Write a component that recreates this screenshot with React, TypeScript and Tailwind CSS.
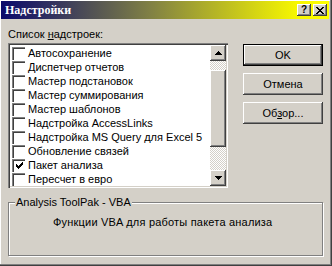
import React from 'react'

const addins = [
  { name: 'Автосохранение', on: false },
  { name: 'Диспетчер отчетов', on: false },
  { name: 'Мастер подстановок', on: false },
  { name: 'Мастер суммирования', on: false },
  { name: 'Мастер шаблонов', on: false },
  { name: 'Надстройка AccessLinks', on: false },
  { name: 'Надстройка MS Query для Excel 5', on: false },
  { name: 'Обновление связей', on: false },
  { name: 'Пакет анализа', on: true },
  { name: 'Пересчет в евро', on: false },
]

const raised =
  'shadow-[inset_-1px_-1px_#404040,inset_1px_1px_#ffffff,inset_-2px_-2px_#808080,inset_2px_2px_#d4d0c8]'

function CheckMark() {
  // classic 7x7 bitmap tick
  const px = [
    [6, 0], [5, 1], [6, 1], [0, 2], [4, 2], [5, 2], [6, 2],
    [0, 3], [1, 3], [3, 3], [4, 3], [5, 3],
    [0, 4], [1, 4], [2, 4], [3, 4], [4, 4],
    [1, 5], [2, 5], [3, 5], [2, 6],
  ]
  return (
    <svg width="7" height="7" viewBox="0 0 7 7" shapeRendering="crispEdges">
      {px.map(([x, y]) => (
        <rect key={`${x}-${y}`} x={x} y={y} width="1" height="1" fill="#000" />
      ))}
    </svg>
  )
}

function Arrow({ down }: { down?: boolean }) {
  return (
    <svg width="7" height="4" viewBox="0 0 7 4" shapeRendering="crispEdges">
      {down ? (
        <path d="M0 0h7v1H0zM1 1h5v1H1zM2 2h3v1H2zM3 3h1v1H3z" fill="#000" />
      ) : (
        <path d="M3 0h1v1H3zM2 1h3v1H2zM1 2h5v1H1zM0 3h7v1H0z" fill="#000" />
      )}
    </svg>
  )
}

function WinButton({ children, isDefault }: any) {
  return (
    <div
      className={`w-[80px] h-[22px] ${isDefault ? 'border border-black' : ''} bg-[#d4d0c8]`}
    >
      <div
        className={`w-full h-full flex items-center justify-center text-black ${raised}`}
      >
        {children}
      </div>
    </div>
  )
}

export default function App() {
  return (
    <div className="w-[332px] h-[266px] bg-[#d4d0c8] font-['Liberation_Sans',sans-serif] text-[11px] leading-[13px] text-black shadow-[inset_-1px_-1px_#404040,inset_-2px_-2px_#808080,inset_1px_1px_#ffffff] overflow-hidden">
      <div className="ml-[1px] pt-[1px] w-[328px]">
        <div className="h-[18px] flex items-center justify-between pl-[4px] pr-[2px] bg-[linear-gradient(to_right,#0a0a6c,#7f7f45_45%,#f6f600_90%,#ffff00)]">
          <span className="text-white font-bold font-['Liberation_Serif',serif] text-[12px]">Надстройки</span>
          <div className="flex gap-[2px]">
            <div className={`w-[14px] h-[12px] bg-[#d4d0c8] flex items-center justify-center ${raised}`}>
              <span className="font-bold text-[10px] leading-[10px] -mt-[1px]">?</span>
            </div>
            <div className={`w-[14px] h-[12px] bg-[#d4d0c8] flex items-center justify-center ${raised}`}>
              <svg width="8" height="7" viewBox="0 0 8 7" shapeRendering="crispEdges">
                <path d="M0 0h2v1H0zM6 0h2v1H6zM1 1h2v1H1zM5 1h2v1H5zM2 2h4v1H2zM3 3h2v1H3zM2 4h4v1H2zM1 5h2v1H1zM5 5h2v1H5zM0 6h2v1H0zM6 6h2v1H6z" fill="#000" />
              </svg>
            </div>
          </div>
        </div>
      </div>

      <div className="pl-[8px] pt-[9px]">
        <div className="h-[13px]">
          Список <span className="underline">н</span>адстроек:
        </div>

        <div className="flex mt-[2px]">
          <div className="w-[220px] h-[145px] bg-white p-[2px] flex shadow-[inset_1px_1px_#808080,inset_2px_2px_#404040,inset_-1px_-1px_#ffffff,inset_-2px_-2px_#d4d0c8]">
            <div className="flex-1 pt-[1px] pl-[2px]">
              {addins.map(a => (
                <div key={a.name} className="h-[14px] flex items-center gap-[3px]">
                  <div className="w-[13px] h-[13px] bg-white flex items-center justify-center pl-[1px] pt-[1px] shadow-[inset_1px_1px_#808080,inset_2px_2px_#404040]">
                    {a.on && <CheckMark />}
                  </div>
                  <span className="whitespace-nowrap">{a.name}</span>
                </div>
              ))}
            </div>
            <div className="w-[16px] h-[141px] flex flex-col">
              <div className={`h-[16px] bg-[#d4d0c8] flex items-center justify-center ${raised}`}>
                <Arrow />
              </div>
              <div className="h-[9px] bg-[repeating-conic-gradient(#d4d0c8_0_25%,#ffffff_0_50%)] bg-[length:2px_2px]" />
              <div className={`h-[77px] bg-[#d4d0c8] ${raised}`} />
              <div className="h-[23px] bg-[repeating-conic-gradient(#d4d0c8_0_25%,#ffffff_0_50%)] bg-[length:2px_2px]" />
              <div className={`h-[16px] bg-[#d4d0c8] flex items-center justify-center ${raised}`}>
                <Arrow down />
              </div>
            </div>
          </div>

          <div className="ml-[15px] mt-[1px] flex flex-col gap-[7px]">
            <WinButton isDefault>OK</WinButton>
            <WinButton>Отмена</WinButton>
            <WinButton>
              <span>
                Об<span className="underline">з</span>ор...
              </span>
            </WinButton>
          </div>
        </div>

        <div className="relative mt-[14px] w-[315px] h-[54px] border border-[#808080] shadow-[inset_1px_1px_#ffffff,1px_1px_#ffffff]">
          <span className="absolute -top-[7px] left-[6px] px-[1px] bg-[#d4d0c8]">
            Analysis ToolPak - VBA
          </span>
          <div className="pt-[13px] pl-[44px] tracking-[0.2px]">Функции VBA для работы пакета анализа</div>
        </div>
      </div>
    </div>
  )
}
